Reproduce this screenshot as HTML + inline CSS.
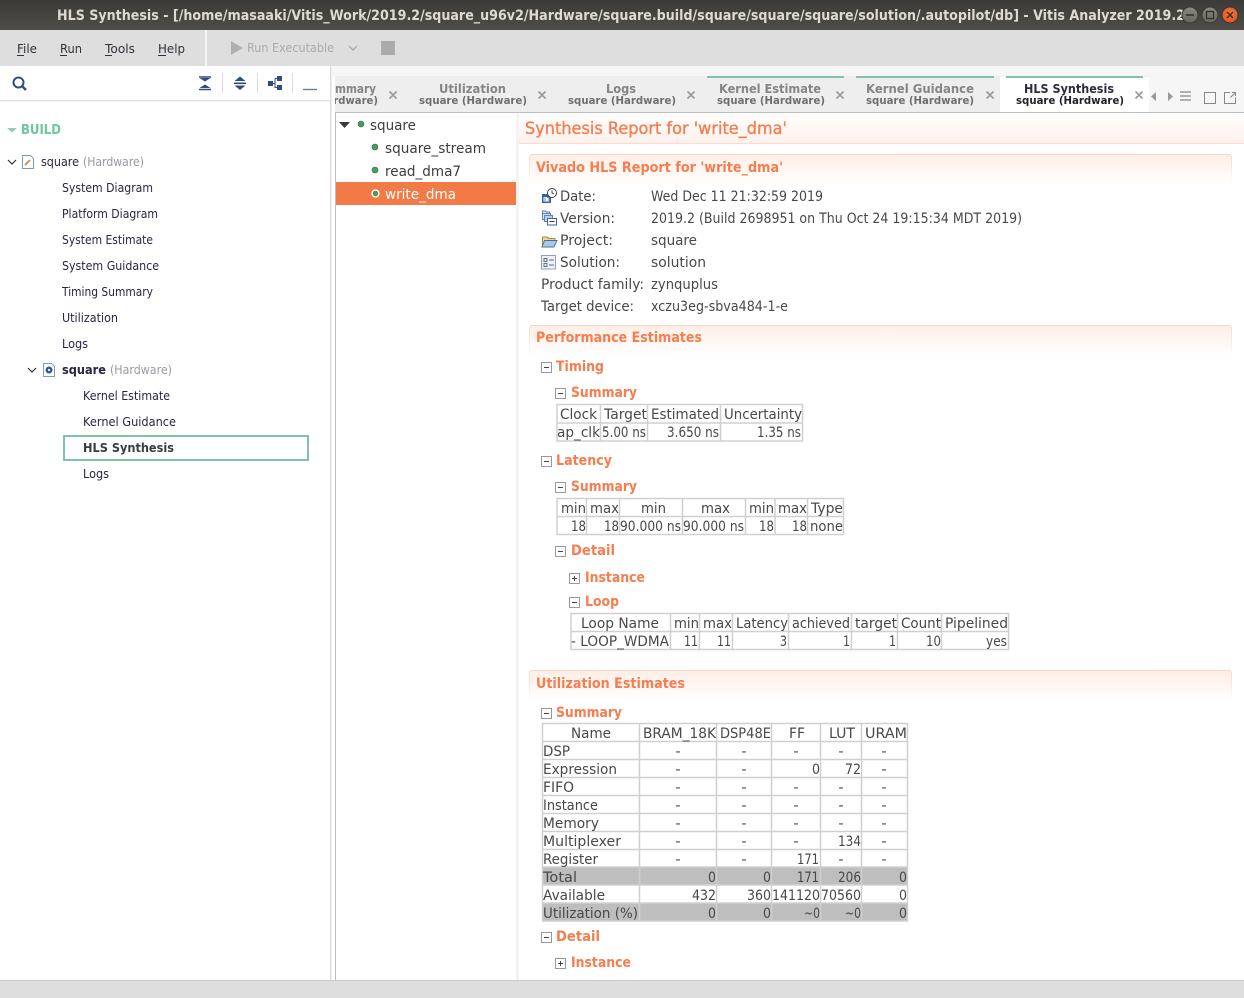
<!DOCTYPE html>
<html><head><meta charset="utf-8"><title>HLS Synthesis</title>
<style>
html,body{margin:0;padding:0;width:1244px;height:998px;overflow:hidden;background:#fff}
svg{display:block}
text{font-family:"DejaVu Sans","Liberation Sans",sans-serif;white-space:pre}
.t{font-size:14.5px;fill:#484848}
.o{font-size:14.5px;font-weight:bold;fill:#f77c4e}
.n{font-size:12px;fill:#2c2440}
.g{font-size:12px;fill:#9a9aa2}
.a{font-size:12px;font-weight:bold;fill:#858585}
.b{font-size:10.5px;font-weight:bold;fill:#6e6e6e}
.m{font-size:12.5px;fill:#33303a}
.grid{stroke:#d0d0d0;stroke-width:1.5;fill:none}
.x{stroke:#999;stroke-width:1.6;fill:none}
</style></head><body>
<svg xmlns="http://www.w3.org/2000/svg" width="1244" height="998" viewBox="0 0 1244 998">
<defs>
<linearGradient id="tb" x1="0" y1="0" x2="0" y2="1"><stop offset="0" stop-color="#3b3a36"/><stop offset="1" stop-color="#4e4d47"/></linearGradient>
<linearGradient id="sec" x1="0" y1="0" x2="0" y2="1"><stop offset="0" stop-color="#feeee6"/><stop offset="1" stop-color="#fff"/></linearGradient>
<linearGradient id="secb" x1="0" y1="0" x2="0" y2="1"><stop offset="0" stop-color="#f9d6c3"/><stop offset="1" stop-color="#fff"/></linearGradient>
<linearGradient id="hd" x1="0" y1="0" x2="0" y2="1"><stop offset="0" stop-color="#fff"/><stop offset="1" stop-color="#fef1eb"/></linearGradient>
<linearGradient id="wb" x1="0" y1="0" x2="0" y2="1"><stop offset="0" stop-color="#8a8980"/><stop offset="1" stop-color="#66655e"/></linearGradient>
<radialGradient id="cl" cx=".5" cy=".4" r=".6"><stop offset="0" stop-color="#f4793f"/><stop offset="1" stop-color="#df5522"/></radialGradient>
<clipPath id="c1"><rect x="335" y="76" width="60" height="36"/></clipPath>
<clipPath id="c2"><rect x="0" y="0" width="1184" height="30"/></clipPath>
<g id="mi"><rect x=".5" y=".5" width="10" height="10" fill="#fff" stroke="#999"/><path d="M3 5.5h5" stroke="#444" stroke-width="1"/></g>
<g id="pl"><rect x=".5" y=".5" width="10" height="10" fill="#fff" stroke="#999"/><path d="M3 5.5h5M5.5 3v5" stroke="#444" stroke-width="1"/></g>
</defs>

<rect width="1244" height="998" fill="#fff"/>
<!-- title bar -->
<rect width="1244" height="30" fill="url(#tb)"/>
<text x="57" y="20" clip-path="url(#c2)" font-size="14.500" font-weight="bold" fill="#dfdbd2" textLength="1128" lengthAdjust="spacingAndGlyphs">HLS Synthesis - [/home/masaaki/Vitis_Work/2019.2/square_u96v2/Hardware/square.build/square/square/square/solution/.autopilot/db] - Vitis Analyzer 2019.2</text>
<circle cx="1190" cy="15" r="8" fill="url(#wb)" stroke="#3a3934"/><path d="M1186 15h8" stroke="#33322e" stroke-width="1.6"/>
<circle cx="1210" cy="15" r="8" fill="url(#wb)" stroke="#3a3934"/><rect x="1206.500" y="11.500" width="7" height="7" fill="none" stroke="#33322e" stroke-width="1.3"/>
<circle cx="1230" cy="15" r="8" fill="url(#cl)" stroke="#3a3934"/><path d="M1227 12l6 6M1233 12l-6 6" stroke="#4a2a18" stroke-width="1.5"/>

<!-- menu bar -->
<rect y="30" width="1244" height="36" fill="#dedede"/>
<rect x="205" y="30" width="2" height="36" fill="#f6f6f6"/>
<text class="m" x="17" y="53" textLength="20" lengthAdjust="spacingAndGlyphs">File</text><rect x="17" y="55" width="7" height="1" fill="#33303a"/>
<text class="m" x="60" y="53" textLength="22" lengthAdjust="spacingAndGlyphs">Run</text><rect x="60" y="55" width="7" height="1" fill="#33303a"/>
<text class="m" x="105" y="53" textLength="30" lengthAdjust="spacingAndGlyphs">Tools</text><rect x="105" y="55" width="7" height="1" fill="#33303a"/>
<text class="m" x="158" y="53" textLength="27" lengthAdjust="spacingAndGlyphs">Help</text><rect x="158" y="55" width="8" height="1" fill="#33303a"/>
<path d="M231 41l12 7-12 7z" fill="#b0b0b0"/>
<text x="247" y="52" font-size="12" fill="#ababab" textLength="87" lengthAdjust="spacingAndGlyphs">Run Executable</text>
<path d="M349 46l4 4 4-4" fill="none" stroke="#aaa" stroke-width="1.4"/>
<rect x="381" y="41" width="14" height="14" fill="#ababab"/>

<!-- left panel -->
<rect y="66" width="330" height="914" fill="#fff"/>
<rect x="330" y="66" width="1.5" height="914" fill="#dcdcdc"/>
<rect x="332" y="66" width="912" height="10" fill="#f6f6f6"/>
<rect y="100" width="330" height="1.5" fill="#e4e4e4"/>
<circle cx="18.500" cy="82.500" r="5" fill="none" stroke="#2f4d80" stroke-width="2"/><path d="M22 86l4 4" stroke="#2f4d80" stroke-width="2.400"/>
<path d="M199.500 78h11l-5.500 3.500zM199.500 88h11l-5.500-3.500z" fill="#2f4d80"/><path d="M199 77h12M199 89.500h12" stroke="#2f4d80" stroke-width="1.600"/>
<path d="M240 76.500l5.500 4.500h-11zM240 90l5.500-4.500h-11z" fill="#2f4d80"/><path d="M234 83.300h12" stroke="#2f4d80" stroke-width="1.600"/>
<rect x="268" y="81" width="5" height="5" fill="#2f4d80"/><rect x="277" y="76" width="5" height="5" fill="#2f4d80"/><rect x="277" y="85" width="5" height="5" fill="#2f4d80"/><path d="M273 83.500h2M275 78.500v9.500M275 78.500h2M275 87.500h2" stroke="#2f4d80" fill="none"/>
<path d="M303 89.500h14" stroke="#6a7c98" stroke-width="1.400"/>
<path d="M222.500 73v20M257.500 73v20M292.500 73v20" stroke="#dcdcdc"/>

<path d="M7 128h10l-5 4.500z" fill="#8fcfb4"/>
<text x="21" y="134" font-size="13" font-weight="bold" fill="#6dc6a0" textLength="40" lengthAdjust="spacingAndGlyphs">BUILD</text>

<path d="M8 160l4 4 4-4" fill="none" stroke="#333" stroke-width="1.200"/>
<path d="M22.500 155.500h8l3 3v10h-11z" fill="#fff" stroke="#7f9bb8"/><path d="M25 165l5-5" stroke="#c89a5a" stroke-width="2"/>
<text class="n" x="41" y="166" textLength="38" lengthAdjust="spacingAndGlyphs">square</text>
<text class="g" x="83" y="166" textLength="61" lengthAdjust="spacingAndGlyphs">(Hardware)</text>
<text class="n" x="62" y="192" textLength="91" lengthAdjust="spacingAndGlyphs">System Diagram</text>
<text class="n" x="62" y="218" textLength="96" lengthAdjust="spacingAndGlyphs">Platform Diagram</text>
<text class="n" x="62" y="244" textLength="91" lengthAdjust="spacingAndGlyphs">System Estimate</text>
<text class="n" x="62" y="270" textLength="97" lengthAdjust="spacingAndGlyphs">System Guidance</text>
<text class="n" x="62" y="296" textLength="91" lengthAdjust="spacingAndGlyphs">Timing Summary</text>
<text class="n" x="62" y="322" textLength="56" lengthAdjust="spacingAndGlyphs">Utilization</text>
<text class="n" x="62" y="348" textLength="26" lengthAdjust="spacingAndGlyphs">Logs</text>
<path d="M28 368l4 4 4-4" fill="none" stroke="#333" stroke-width="1.200"/>
<path d="M43.500 363.500h8l3 3v10h-11z" fill="#fff" stroke="#7f9bb8"/><circle cx="49" cy="370" r="2.300" fill="#fff" stroke="#2f5a9a" stroke-width="2.400"/>
<text class="n" x="62" y="374" font-weight="bold" textLength="44" lengthAdjust="spacingAndGlyphs">square</text>
<text class="g" x="110" y="374" textLength="62" lengthAdjust="spacingAndGlyphs">(Hardware)</text>
<text class="n" x="83" y="400" textLength="87" lengthAdjust="spacingAndGlyphs">Kernel Estimate</text>
<text class="n" x="83" y="426" textLength="93" lengthAdjust="spacingAndGlyphs">Kernel Guidance</text>
<rect x="64" y="436" width="244" height="24" fill="#fff" stroke="#7fc4a8" stroke-width="2"/>
<text class="n" x="83" y="452" font-weight="bold" style="fill:#3a3a44" textLength="91" lengthAdjust="spacingAndGlyphs">HLS Synthesis</text>
<text class="n" x="83" y="478" textLength="26" lengthAdjust="spacingAndGlyphs">Logs</text>

<!-- tabs -->
<rect x="335" y="76" width="909" height="36" fill="#eeeeee"/>
<rect x="1149" y="76" width="95" height="36" fill="#f6f6f6"/>
<rect x="707" y="76" width="137" height="2" fill="#7fc4a8"/><rect x="856" y="76" width="138" height="2" fill="#7fc4a8"/>
<rect x="1000" y="77" width="149" height="35" fill="#fff"/><rect x="1006" y="76" width="137" height="2" fill="#7fc4a8"/>
<g clip-path="url(#c1)"><text class="a" x="320" y="93" textLength="56" lengthAdjust="spacingAndGlyphs">Summary</text>
<text class="b" x="271" y="104" textLength="107" lengthAdjust="spacingAndGlyphs">square (Hardware)</text></g>
<text class="a" x="439" y="93" textLength="67" lengthAdjust="spacingAndGlyphs">Utilization</text><text class="b" x="419" y="104" textLength="108" lengthAdjust="spacingAndGlyphs">square (Hardware)</text>
<text class="a" x="606" y="93" textLength="30" lengthAdjust="spacingAndGlyphs">Logs</text><text class="b" x="568" y="104" textLength="108" lengthAdjust="spacingAndGlyphs">square (Hardware)</text>
<text class="a" x="719" y="93" textLength="102" lengthAdjust="spacingAndGlyphs">Kernel Estimate</text><text class="b" x="717" y="104" textLength="108" lengthAdjust="spacingAndGlyphs">square (Hardware)</text>
<text class="a" x="866" y="93" textLength="108" lengthAdjust="spacingAndGlyphs">Kernel Guidance</text><text class="b" x="866" y="104" textLength="108" lengthAdjust="spacingAndGlyphs">square (Hardware)</text>
<text class="a" x="1024" y="93" style="fill:#2c2c3a" textLength="90" lengthAdjust="spacingAndGlyphs">HLS Synthesis</text><text class="b" x="1016" y="104" style="fill:#22222e" textLength="108" lengthAdjust="spacingAndGlyphs">square (Hardware)</text>
<path class="x" d="M389.500 91.500l7 7M396.500 91.500l-7 7M538.500 91.500l7 7M545.500 91.500l-7 7M687.500 91.500l7 7M694.500 91.500l-7 7M836.500 91.500l7 7M843.500 91.500l-7 7M986.500 91.500l7 7M993.500 91.500l-7 7M1135.500 91.500l7 7M1142.500 91.500l-7 7"/>
<path d="M1156 92v9l-5-4.500zM1168 92v9l5-4.500z" fill="#999"/>
<path d="M1180 92h11M1180 96h11M1180 100h11" stroke="#999" stroke-width="1.500"/>
<rect x="1204.500" y="92.500" width="11" height="11" fill="none" stroke="#888"/>
<path d="M1230 92.500h-5.500v11h11v-6" fill="none" stroke="#888"/><path d="M1230.500 97.500l4.500-4.500M1232 92.500h3.500v3.500" fill="none" stroke="#888"/>

<!-- main panel -->
<rect x="335" y="112" width="909" height="868" fill="#fff"/>
<path d="M335.500 980V112.500H1244" fill="none" stroke="#bdbdbd"/>
<rect x="516" y="113" width="3" height="867" fill="#f3f3f3"/>
<path d="M339 122h11l-5.500 6z" fill="#3a3a3a"/>
<circle cx="361" cy="124" r="3" fill="#4c9b64" stroke="#2f6d45" stroke-width=".6"/>
<text x="370" y="130" font-size="14.500" fill="#3d3d3d" textLength="46" lengthAdjust="spacingAndGlyphs">square</text>
<circle cx="375" cy="147" r="3" fill="#4c9b64" stroke="#2f6d45" stroke-width=".6"/>
<text x="385" y="153" font-size="14.500" fill="#3d3d3d" textLength="101" lengthAdjust="spacingAndGlyphs">square_stream</text>
<circle cx="375" cy="170" r="3" fill="#4c9b64" stroke="#2f6d45" stroke-width=".6"/>
<text x="385" y="176" font-size="14.500" fill="#3d3d3d" textLength="76" lengthAdjust="spacingAndGlyphs">read_dma7</text>
<rect x="336" y="182" width="180" height="23" fill="#f27a47"/>
<circle cx="375.500" cy="193.500" r="3.500" fill="#4c9b64" stroke="#fff" stroke-width="1.300"/>
<text x="385" y="199" font-size="14.500" fill="#fff" textLength="71" lengthAdjust="spacingAndGlyphs">write_dma</text>

<!-- report -->
<rect x="519" y="113" width="725" height="30" fill="url(#hd)"/>
<rect x="519" y="143" width="725" height="1" fill="#f8dccf"/>
<text x="525" y="134" font-size="17" fill="#f77c4e" stroke="#f77c4e" stroke-width=".35" textLength="262" lengthAdjust="spacingAndGlyphs">Synthesis Report for 'write_dma'</text>

<rect x="529.500" y="154.500" width="702" height="30" rx="3" fill="url(#sec)" stroke="url(#secb)"/>
<text class="o" x="536" y="172" textLength="247" lengthAdjust="spacingAndGlyphs">Vivado HLS Report for 'write_dma'</text>

<!-- info icons -->
<rect x="542" y="194" width="9" height="9" fill="#2f62b0"/><rect x="543.500" y="197" width="6" height="4.500" fill="#fff"/><path d="M545 197.500v3.500M547 197.500h2v3.500" stroke="#2f62b0" stroke-width=".8" fill="none"/><circle cx="552" cy="193" r="4.500" fill="#fff" stroke="#444"/><path d="M552 190.500v2.500l2 1" stroke="#444" fill="none"/>
<path d="M542.500 213.500v-2.500h3l1 1h3v2" fill="#d6e2f0" stroke="#5f86b5"/><rect x="542.500" y="213.500" width="8" height="6" fill="#d6e2f0" stroke="#5f86b5"/><rect x="544.500" y="215.500" width="8" height="6" fill="#bcd0e6" stroke="#5f86b5"/><rect x="547.500" y="218.500" width="9" height="6.500" fill="#fff" stroke="#46648c"/><path d="M549.500 221.500h5" stroke="#333"/>
<path d="M542.500 246v-9h5l1.500 1.500h6v2h-10" fill="#efd78f" stroke="#8a6a2a" stroke-width=".8"/><path d="M542 247l2.500-6.500h12.500l-3 6.500z" fill="#a9c8ea" stroke="#4a6f9c" stroke-width=".9"/>
<rect x="541.500" y="255.500" width="14" height="13.500" fill="#eef2f8" stroke="#8fa2bc"/><path d="M544 258.500h3v3h-3zM544 263.500h3v3h-3zM549 260h5M549 265h5" fill="none" stroke="#5c6f88"/>

<text class="t" x="560" y="201" textLength="36" lengthAdjust="spacingAndGlyphs">Date:</text>
<text class="t" x="560" y="223" textLength="55" lengthAdjust="spacingAndGlyphs">Version:</text>
<text class="t" x="560" y="245" textLength="53" lengthAdjust="spacingAndGlyphs">Project:</text>
<text class="t" x="560" y="267" textLength="60" lengthAdjust="spacingAndGlyphs">Solution:</text>
<text class="t" x="541" y="289" textLength="103" lengthAdjust="spacingAndGlyphs">Product family:</text>
<text class="t" x="541" y="311" textLength="93" lengthAdjust="spacingAndGlyphs">Target device:</text>
<text class="t" x="651" y="201" textLength="172" lengthAdjust="spacingAndGlyphs">Wed Dec 11 21:32:59 2019</text>
<text class="t" x="651" y="223" textLength="371" lengthAdjust="spacingAndGlyphs">2019.2 (Build 2698951 on Thu Oct 24 19:15:34 MDT 2019)</text>
<text class="t" x="651" y="245" textLength="46" lengthAdjust="spacingAndGlyphs">square</text>
<text class="t" x="651" y="267" textLength="55" lengthAdjust="spacingAndGlyphs">solution</text>
<text class="t" x="651" y="289" textLength="67" lengthAdjust="spacingAndGlyphs">zynquplus</text>
<text class="t" x="651" y="311" textLength="137" lengthAdjust="spacingAndGlyphs">xczu3eg-sbva484-1-e</text>

<rect x="529.500" y="325.500" width="702" height="30" rx="3" fill="url(#sec)" stroke="url(#secb)"/>
<text class="o" x="536" y="342" textLength="166" lengthAdjust="spacingAndGlyphs">Performance Estimates</text>

<use href="#mi" x="541" y="362"/><text class="o" x="556" y="371" textLength="48" lengthAdjust="spacingAndGlyphs">Timing</text>
<use href="#mi" x="555" y="388"/><text class="o" x="571" y="397" textLength="66" lengthAdjust="spacingAndGlyphs">Summary</text>
<path class="grid" d="M557 404.500H802.500V441H557zM557 423h245.500M600.500 404.500v36.500M647.500 404.500v36.500M720.500 404.500v36.500"/>
<text class="t" x="560" y="419" textLength="37" lengthAdjust="spacingAndGlyphs">Clock</text>
<text class="t" x="604" y="419" textLength="43" lengthAdjust="spacingAndGlyphs">Target</text>
<text class="t" x="651" y="419" textLength="68" lengthAdjust="spacingAndGlyphs">Estimated</text>
<text class="t" x="724" y="419" textLength="78" lengthAdjust="spacingAndGlyphs">Uncertainty</text>
<text class="t" x="557" y="437" textLength="43" lengthAdjust="spacingAndGlyphs">ap_clk</text>
<text class="t" x="602" y="437" textLength="44" lengthAdjust="spacingAndGlyphs">5.00 ns</text>
<text class="t" x="667" y="437" textLength="52" lengthAdjust="spacingAndGlyphs">3.650 ns</text>
<text class="t" x="757" y="437" textLength="44" lengthAdjust="spacingAndGlyphs">1.35 ns</text>

<use href="#mi" x="541" y="456"/><text class="o" x="556" y="465" textLength="56" lengthAdjust="spacingAndGlyphs">Latency</text>
<use href="#mi" x="555" y="482"/><text class="o" x="571" y="491" textLength="66" lengthAdjust="spacingAndGlyphs">Summary</text>
<path class="grid" d="M557 498.500H843.500V534.500H557zM557 516.500h286.500M586.500 498.500v36M619.500 498.500v36M682.500 498.500v36M745.500 498.500v36M775 498.500v36M807.500 498.500v36"/>
<text class="t" x="561" y="513" textLength="25" lengthAdjust="spacingAndGlyphs">min</text>
<text class="t" x="590" y="513" textLength="29" lengthAdjust="spacingAndGlyphs">max</text>
<text class="t" x="641" y="513" textLength="25" lengthAdjust="spacingAndGlyphs">min</text>
<text class="t" x="701" y="513" textLength="29" lengthAdjust="spacingAndGlyphs">max</text>
<text class="t" x="749" y="513" textLength="25" lengthAdjust="spacingAndGlyphs">min</text>
<text class="t" x="778" y="513" textLength="29" lengthAdjust="spacingAndGlyphs">max</text>
<text class="t" x="811" y="513" textLength="32" lengthAdjust="spacingAndGlyphs">Type</text>
<text class="t" x="571" y="531" textLength="15" lengthAdjust="spacingAndGlyphs">18</text>
<text class="t" x="604" y="531" textLength="15" lengthAdjust="spacingAndGlyphs">18</text>
<text class="t" x="620" y="531" textLength="61" lengthAdjust="spacingAndGlyphs">90.000 ns</text>
<text class="t" x="683" y="531" textLength="61" lengthAdjust="spacingAndGlyphs">90.000 ns</text>
<text class="t" x="759" y="531" textLength="15" lengthAdjust="spacingAndGlyphs">18</text>
<text class="t" x="792" y="531" textLength="15" lengthAdjust="spacingAndGlyphs">18</text>
<text class="t" x="810" y="531" textLength="33" lengthAdjust="spacingAndGlyphs">none</text>

<use href="#mi" x="555" y="546"/><text class="o" x="571" y="555" textLength="44" lengthAdjust="spacingAndGlyphs">Detail</text>
<use href="#pl" x="569" y="573"/><text class="o" x="585" y="582" textLength="60" lengthAdjust="spacingAndGlyphs">Instance</text>
<use href="#mi" x="569" y="597"/><text class="o" x="585" y="606" textLength="34" lengthAdjust="spacingAndGlyphs">Loop</text>
<path class="grid" d="M571 613.500H1008.500V649.500H571zM571 631.500h437.500M670.500 613.500v36M699.500 613.500v36M732.500 613.500v36M788.500 613.500v36M851.500 613.500v36M897.500 613.500v36M941.500 613.500v36"/>
<text class="t" x="581" y="628" textLength="78" lengthAdjust="spacingAndGlyphs">Loop Name</text>
<text class="t" x="674" y="628" textLength="25" lengthAdjust="spacingAndGlyphs">min</text>
<text class="t" x="703" y="628" textLength="29" lengthAdjust="spacingAndGlyphs">max</text>
<text class="t" x="736" y="628" textLength="52" lengthAdjust="spacingAndGlyphs">Latency</text>
<text class="t" x="792" y="628" textLength="58" lengthAdjust="spacingAndGlyphs">achieved</text>
<text class="t" x="855" y="628" textLength="42" lengthAdjust="spacingAndGlyphs">target</text>
<text class="t" x="901" y="628" textLength="40" lengthAdjust="spacingAndGlyphs">Count</text>
<text class="t" x="945" y="628" textLength="63" lengthAdjust="spacingAndGlyphs">Pipelined</text>
<text class="t" x="571" y="646" textLength="98" lengthAdjust="spacingAndGlyphs">- LOOP_WDMA</text>
<text class="t" x="684" y="646" textLength="14" lengthAdjust="spacingAndGlyphs">11</text>
<text class="t" x="717" y="646" textLength="14" lengthAdjust="spacingAndGlyphs">11</text>
<text class="t" x="780" y="646" textLength="7" lengthAdjust="spacingAndGlyphs">3</text>
<text class="t" x="843" y="646" textLength="7" lengthAdjust="spacingAndGlyphs">1</text>
<text class="t" x="889" y="646" textLength="7" lengthAdjust="spacingAndGlyphs">1</text>
<text class="t" x="926" y="646" textLength="15" lengthAdjust="spacingAndGlyphs">10</text>
<text class="t" x="986" y="646" textLength="21" lengthAdjust="spacingAndGlyphs">yes</text>

<rect x="529.500" y="670.500" width="702" height="30" rx="3" fill="url(#sec)" stroke="url(#secb)"/>
<text class="o" x="536" y="688" textLength="149" lengthAdjust="spacingAndGlyphs">Utilization Estimates</text>
<use href="#mi" x="541" y="708"/><text class="o" x="556" y="717" textLength="66" lengthAdjust="spacingAndGlyphs">Summary</text>

<rect x="542.500" y="867" width="365" height="18" fill="#bebebe"/>
<rect x="542.500" y="903" width="365" height="18" fill="#bebebe"/>
<path class="grid" d="M542.500 723.500H907.500V921H542.500zM542.500 741.500H907.500M542.500 759.500H907.500M542.500 777.500H907.500M542.500 795.500H907.500M542.500 813.500H907.500M542.500 831.500H907.500M542.500 849.500H907.500M542.500 867H907.500M542.500 885H907.500M542.500 903H907.500M639.500 723.500V921M716.500 723.500V921M771.500 723.500V921M820.500 723.500V921M861.500 723.500V921"/>
<text class="t" x="571" y="738" textLength="40" lengthAdjust="spacingAndGlyphs">Name</text>
<text class="t" x="643" y="738" textLength="73" lengthAdjust="spacingAndGlyphs">BRAM_18K</text>
<text class="t" x="720" y="738" textLength="51" lengthAdjust="spacingAndGlyphs">DSP48E</text>
<text class="t" x="789" y="738" textLength="16" lengthAdjust="spacingAndGlyphs">FF</text>
<text class="t" x="829" y="738" textLength="26" lengthAdjust="spacingAndGlyphs">LUT</text>
<text class="t" x="865" y="738" textLength="42" lengthAdjust="spacingAndGlyphs">URAM</text>
<text class="t" x="543" y="756" textLength="27" lengthAdjust="spacingAndGlyphs">DSP</text>
<text class="t" x="543" y="774" textLength="74" lengthAdjust="spacingAndGlyphs">Expression</text>
<text class="t" x="543" y="792" textLength="31" lengthAdjust="spacingAndGlyphs">FIFO</text>
<text class="t" x="543" y="810" textLength="55" lengthAdjust="spacingAndGlyphs">Instance</text>
<text class="t" x="543" y="828" textLength="56" lengthAdjust="spacingAndGlyphs">Memory</text>
<text class="t" x="543" y="846" textLength="78" lengthAdjust="spacingAndGlyphs">Multiplexer</text>
<text class="t" x="543" y="864" textLength="55" lengthAdjust="spacingAndGlyphs">Register</text>
<text class="t" x="543" y="882" textLength="34" lengthAdjust="spacingAndGlyphs">Total</text>
<text class="t" x="543" y="900" textLength="62" lengthAdjust="spacingAndGlyphs">Available</text>
<text class="t" x="543" y="918" textLength="95" lengthAdjust="spacingAndGlyphs">Utilization (%)</text>

<text class="t" text-anchor="middle" x="678" y="756">-</text><text class="t" text-anchor="middle" x="744" y="756">-</text><text class="t" text-anchor="middle" x="796" y="756">-</text><text class="t" text-anchor="middle" x="841" y="756">-</text><text class="t" text-anchor="middle" x="884" y="756">-</text>
<text class="t" text-anchor="middle" x="678" y="774">-</text><text class="t" text-anchor="middle" x="744" y="774">-</text><text class="t" x="812" y="774" textLength="8" lengthAdjust="spacingAndGlyphs">0</text><text class="t" x="845" y="774" textLength="16" lengthAdjust="spacingAndGlyphs">72</text><text class="t" text-anchor="middle" x="884" y="774">-</text>
<text class="t" text-anchor="middle" x="678" y="792">-</text><text class="t" text-anchor="middle" x="744" y="792">-</text><text class="t" text-anchor="middle" x="796" y="792">-</text><text class="t" text-anchor="middle" x="841" y="792">-</text><text class="t" text-anchor="middle" x="884" y="792">-</text>
<text class="t" text-anchor="middle" x="678" y="810">-</text><text class="t" text-anchor="middle" x="744" y="810">-</text><text class="t" text-anchor="middle" x="796" y="810">-</text><text class="t" text-anchor="middle" x="841" y="810">-</text><text class="t" text-anchor="middle" x="884" y="810">-</text>
<text class="t" text-anchor="middle" x="678" y="828">-</text><text class="t" text-anchor="middle" x="744" y="828">-</text><text class="t" text-anchor="middle" x="796" y="828">-</text><text class="t" text-anchor="middle" x="841" y="828">-</text><text class="t" text-anchor="middle" x="884" y="828">-</text>
<text class="t" text-anchor="middle" x="678" y="846">-</text><text class="t" text-anchor="middle" x="744" y="846">-</text><text class="t" text-anchor="middle" x="796" y="846">-</text><text class="t" x="838" y="846" textLength="23" lengthAdjust="spacingAndGlyphs">134</text><text class="t" text-anchor="middle" x="884" y="846">-</text>
<text class="t" text-anchor="middle" x="678" y="864">-</text><text class="t" text-anchor="middle" x="744" y="864">-</text><text class="t" x="797" y="864" textLength="22" lengthAdjust="spacingAndGlyphs">171</text><text class="t" text-anchor="middle" x="841" y="864">-</text><text class="t" text-anchor="middle" x="884" y="864">-</text>
<text class="t" x="708" y="882" textLength="8" lengthAdjust="spacingAndGlyphs">0</text><text class="t" x="763" y="882" textLength="8" lengthAdjust="spacingAndGlyphs">0</text><text class="t" x="797" y="882" textLength="22" lengthAdjust="spacingAndGlyphs">171</text><text class="t" x="838" y="882" textLength="23" lengthAdjust="spacingAndGlyphs">206</text><text class="t" x="899" y="882" textLength="8" lengthAdjust="spacingAndGlyphs">0</text>
<text class="t" x="692" y="900" textLength="24" lengthAdjust="spacingAndGlyphs">432</text><text class="t" x="747" y="900" textLength="24" lengthAdjust="spacingAndGlyphs">360</text><text class="t" x="772" y="900" textLength="48" lengthAdjust="spacingAndGlyphs">141120</text><text class="t" x="821" y="900" textLength="40" lengthAdjust="spacingAndGlyphs">70560</text><text class="t" x="899" y="900" textLength="8" lengthAdjust="spacingAndGlyphs">0</text>
<text class="t" x="708" y="918" textLength="8" lengthAdjust="spacingAndGlyphs">0</text><text class="t" x="763" y="918" textLength="8" lengthAdjust="spacingAndGlyphs">0</text><text class="t" x="804" y="918" textLength="16" lengthAdjust="spacingAndGlyphs">~0</text><text class="t" x="845" y="918" textLength="16" lengthAdjust="spacingAndGlyphs">~0</text><text class="t" x="899" y="918" textLength="8" lengthAdjust="spacingAndGlyphs">0</text>

<use href="#mi" x="541" y="932"/><text class="o" x="556" y="941" textLength="44" lengthAdjust="spacingAndGlyphs">Detail</text>
<use href="#pl" x="555" y="958"/><text class="o" x="571" y="967" textLength="60" lengthAdjust="spacingAndGlyphs">Instance</text>

<!-- bottom -->
<rect y="980" width="1244" height="18" fill="#dedede"/>
<rect y="980" width="1244" height="1" fill="#c8c8c8"/>
</svg>
</body></html>
